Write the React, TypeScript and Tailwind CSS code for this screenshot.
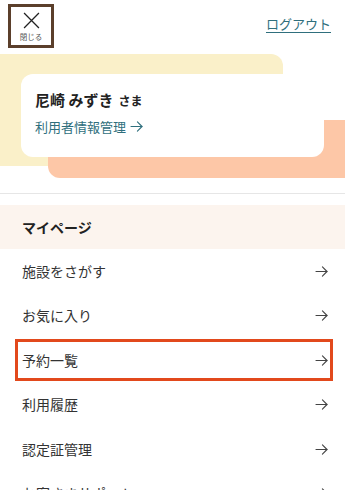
import React from "react";

const MENU_ITEMS = [
  { label: "施設をさがす" },
  { label: "お気に入り" },
  { label: "予約一覧", highlighted: true },
  { label: "利用履歴" },
  { label: "認定証管理" },
  { label: "お客さまサポート" },
];

function ArrowRight({ className = "" }: { className?: string }) {
  return (
    <svg
      viewBox="0 0 14 12"
      className={className}
      fill="none"
      stroke="currentColor"
      strokeWidth="1.2"
      strokeLinecap="round"
      strokeLinejoin="round"
    >
      <path d="M1 6h12" />
      <path d="M8 1l5 5-5 5" />
    </svg>
  );
}

export default function App() {
  return (
    <div
      className="w-[345px] h-[490px] overflow-hidden bg-white text-[#333]"
      style={{ fontFamily: '"Noto Sans CJK JP", "Noto Sans", sans-serif' }}
    >
      {/* top bar */}
      <div className="flex items-start justify-between pl-[8px] pr-[14px] pt-[4px]">
        <button className="w-[46px] h-[44px] border-[3px] border-[#5b3f2b] flex flex-col items-center pt-[5px]">
          <svg viewBox="0 0 16 16" className="w-[17px] h-[17px] text-[#222]" fill="none" stroke="currentColor" strokeWidth="1.2">
            <path d="M1 1l14 14M15 1L1 15" />
          </svg>
          <span className="text-[7.5px] leading-none mt-[4px] text-[#555]">閉じる</span>
        </button>
        <a href="#" className="mt-[13px] text-[13px] leading-none text-[#2f6f7d] underline underline-offset-[3px]">
          ログアウト
        </a>
      </div>

      {/* user card */}
      <div className="relative mt-[6px] h-[124px]">
        <div className="absolute left-0 top-0 w-[283px] h-[112px] rounded-tr-[12px] bg-[#faf0c9]" />
        <div className="absolute left-[48px] top-[66px] right-0 bottom-0 rounded-bl-[12px] bg-[#fdc7a7]" />
        <div className="relative mx-[21px] top-[20px] h-[83px] rounded-[12px] bg-white px-[14px] pt-[18px]">
          <p className="flex items-baseline font-bold text-[15px] leading-none text-[#222]">
            尼崎 みずき<span className="ml-[5px] text-[12px]">さま</span>
          </p>
          <a href="#" className="mt-[13px] flex items-center gap-[4px] text-[13px] leading-none text-[#2f6f7d]">
            利用者情報管理
            <ArrowRight className="w-[13px] h-[11px]" />
          </a>
        </div>
      </div>

      <div className="mt-[15px] h-px bg-[#e6e6e6]" />

      {/* menu */}
      <div className="mt-[11px]">
        <div className="h-[44px] bg-[#fcf4ee] px-[22px] flex items-center">
          <h2 className="font-bold text-[14px] text-[#222]">マイページ</h2>
        </div>
        <ul>
          {MENU_ITEMS.map((item) => (
            <li key={item.label} className="relative h-[44.5px] px-[22px] pr-[17px] flex items-center justify-between">
              <span className="text-[14px] text-[#333]">{item.label}</span>
              <ArrowRight className="w-[13px] h-[11px] text-[#444]" />
              {item.highlighted && (
                <span className="absolute left-[15px] right-[12px] top-[1px] bottom-[2px] border-[3px] border-[#e2491c]" />
              )}
            </li>
          ))}
        </ul>
      </div>
    </div>
  );
}
